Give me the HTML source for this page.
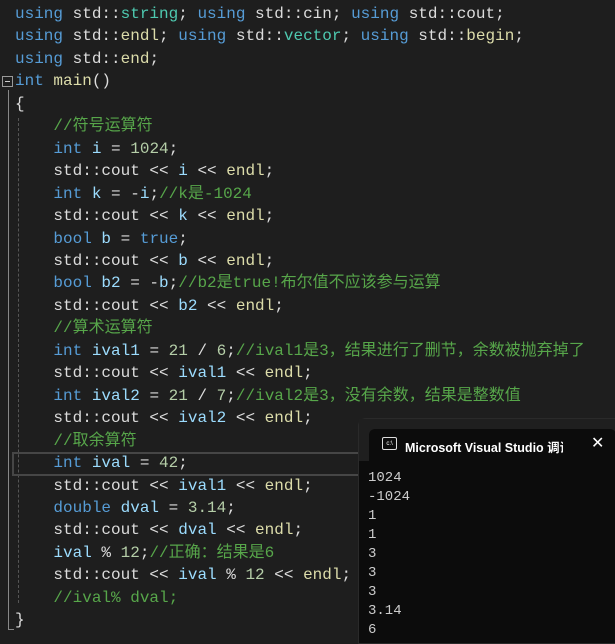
<html><head><style>
body{margin:0;width:615px;height:642px;background:#1e1e1e;overflow:hidden;position:relative;font-family:"Liberation Mono","Noto Sans CJK SC",monospace;font-size:16px}
.c{position:absolute;left:15px;top:3px;line-height:22.45px;white-space:pre;color:#dcdcdc}
.k{color:#569cd6}.t{color:#4ec9b0}.f{color:#dcdcaa}.v{color:#9cdcfe}.n{color:#b5cea8}.m{color:#57a64a}.w{color:#dcdcdc}
.term{position:absolute;left:358px;top:418px;width:257px;height:224px;background:#0c0c0c;border-top-left-radius:8px;border:1px solid #2a2a2a}
.bar{height:42px;background:#1f1f1f}
.tab{position:absolute;left:10px;top:10px;width:247px;height:33px;background:#0c0c0c;border-radius:6px 6px 0 0;font-family:"Liberation Sans","Noto Sans CJK SC",sans-serif;font-size:12.5px;color:#fff}
.out{position:absolute;left:9px;top:50px;line-height:19px;color:#cccccc;font-size:14px;white-space:pre}
</style></head><body>
<div style="position:absolute;left:8px;top:90px;width:1px;height:540px;background:#888"></div>
<div style="position:absolute;left:8px;top:629px;width:6px;height:1px;background:#888"></div>
<div style="position:absolute;left:18px;top:118px;width:0;height:485px;border-left:1px dashed #555"></div>
<div style="position:absolute;left:2px;top:76px;width:9px;height:9px;border:1px solid #999;"><div style="position:absolute;left:2px;top:4px;width:5px;height:1px;background:#ccc"></div></div>
<div style="position:absolute;left:12px;top:452px;width:346px;height:20px;border:2px solid #464646;border-right:none"></div>
<div class="c"><span class="k">using</span> std::<span class="t">string</span>; <span class="k">using</span> std::<span class="w">cin</span>; <span class="k">using</span> std::<span class="w">cout</span>;
<span class="k">using</span> std::<span class="f">endl</span>; <span class="k">using</span> std::<span class="t">vector</span>; <span class="k">using</span> std::<span class="f">begin</span>;
<span class="k">using</span> std::<span class="f">end</span>;
<span class="k">int</span> <span class="f">main</span>()
{
    <span class="m">//符号运算符</span>
    <span class="k">int</span> <span class="v">i</span> = <span class="n">1024</span>;
    std::<span class="w">cout</span> &lt;&lt; <span class="v">i</span> &lt;&lt; <span class="f">endl</span>;
    <span class="k">int</span> <span class="v">k</span> = -<span class="v">i</span>;<span class="m">//k是-1024</span>
    std::<span class="w">cout</span> &lt;&lt; <span class="v">k</span> &lt;&lt; <span class="f">endl</span>;
    <span class="k">bool</span> <span class="v">b</span> = <span class="k">true</span>;
    std::<span class="w">cout</span> &lt;&lt; <span class="v">b</span> &lt;&lt; <span class="f">endl</span>;
    <span class="k">bool</span> <span class="v">b2</span> = -<span class="v">b</span>;<span class="m">//b2是true!布尔值不应该参与运算</span>
    std::<span class="w">cout</span> &lt;&lt; <span class="v">b2</span> &lt;&lt; <span class="f">endl</span>;
    <span class="m">//算术运算符</span>
    <span class="k">int</span> <span class="v">ival1</span> = <span class="n">21</span> / <span class="n">6</span>;<span class="m">//ival1是3，结果进行了删节，余数被抛弃掉了</span>
    std::<span class="w">cout</span> &lt;&lt; <span class="v">ival1</span> &lt;&lt; <span class="f">endl</span>;
    <span class="k">int</span> <span class="v">ival2</span> = <span class="n">21</span> / <span class="n">7</span>;<span class="m">//ival2是3，没有余数，结果是整数值</span>
    std::<span class="w">cout</span> &lt;&lt; <span class="v">ival2</span> &lt;&lt; <span class="f">endl</span>;
    <span class="m">//取余算符</span>
    <span class="k">int</span> <span class="v">ival</span> = <span class="n">42</span>;
    std::<span class="w">cout</span> &lt;&lt; <span class="v">ival1</span> &lt;&lt; <span class="f">endl</span>;
    <span class="k">double</span> <span class="v">dval</span> = <span class="n">3.14</span>;
    std::<span class="w">cout</span> &lt;&lt; <span class="v">dval</span> &lt;&lt; <span class="f">endl</span>;
    <span class="v">ival</span> % <span class="n">12</span>;<span class="m">//正确：结果是6</span>
    std::<span class="w">cout</span> &lt;&lt; <span class="v">ival</span> % <span class="n">12</span> &lt;&lt; <span class="f">endl</span>;
    <span class="m">//ival% dval;</span>
}</div>
<div class="term"><div class="bar"></div>
<div class="tab"><div style="position:absolute;left:13px;top:8px;width:13px;height:11px;border:1px solid #ddd;border-radius:2px;font-size:6px;line-height:12px;text-align:center">c:\</div>
<div style="position:absolute;left:36px;top:8px;white-space:nowrap;width:158px;overflow:hidden;font-weight:bold">Microsoft Visual Studio 调试控</div>
<div style="position:absolute;left:222px;top:4px;font-size:16px">✕</div></div>
<div class="out">1024
-1024
1
1
3
3
3
3.14
6</div></div>
</body></html>
